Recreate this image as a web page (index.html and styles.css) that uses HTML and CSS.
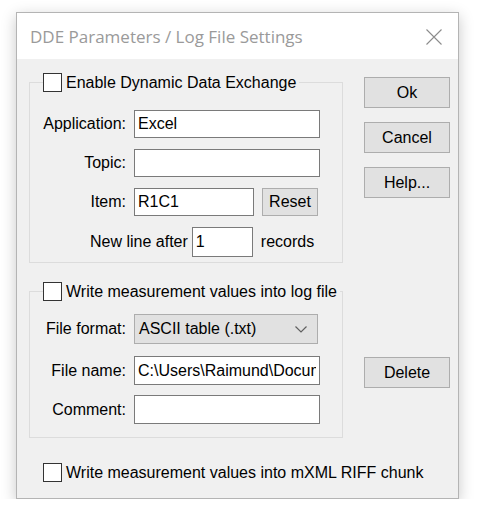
FILE: index.html
```html
<!DOCTYPE html>
<html lang="en">
<head>
    <meta charset="UTF-8">
    <title>DDE Parameters / Log File Settings</title>
    <link rel="stylesheet" href="styles.css">
</head>
<body>
    <div class="window">
        <div class="titlebar">
            <span class="title">DDE Parameters / Log File Settings</span>
            <svg class="close" width="16" height="16" viewBox="0 0 16 16">
                <path d="M0.5 0.5 L15.5 15.5 M15.5 0.5 L0.5 15.5" stroke="#8c8c8c" stroke-width="1.1" fill="none"/>
            </svg>
        </div>
        <div class="client">
            <div class="left">
                <fieldset class="group dde">
                    <legend><label class="check"><input type="checkbox"> Enable Dynamic Data Exchange</label></legend>
                    <div class="row">
                        <span class="lbl">Application:</span>
                        <input class="edit wide" type="text" value="Excel">
                    </div>
                    <div class="row">
                        <span class="lbl">Topic:</span>
                        <input class="edit wide" type="text" value="">
                    </div>
                    <div class="row">
                        <span class="lbl">Item:</span>
                        <input class="edit item" type="text" value="R1C1">
                        <button class="btn reset">Reset</button>
                    </div>
                    <div class="row newline">
                        <span class="lbl-free">New line after</span>
                        <input class="edit count" type="text" value="1">
                        <span class="unit">records</span>
                    </div>
                </fieldset>

                <fieldset class="group log">
                    <legend><label class="check"><input type="checkbox"> Write measurement values into log file</label></legend>
                    <div class="row">
                        <span class="lbl">File format:</span>
                        <div class="combo">
                            <span>ASCII table (.txt)</span>
                            <svg width="12" height="7" viewBox="0 0 12 7">
                                <polyline points="0.5,0.5 6,6 11.5,0.5" stroke="#606060" stroke-width="1.2" fill="none"/>
                            </svg>
                        </div>
                    </div>
                    <div class="row">
                        <span class="lbl">File name:</span>
                        <input class="edit wide tall" type="text" value="C:\Users\Raimund\Documents\log.txt">
                    </div>
                    <div class="row">
                        <span class="lbl">Comment:</span>
                        <input class="edit wide tall" type="text" value="">
                    </div>
                </fieldset>

                <label class="check riff"><input type="checkbox"> Write measurement values into mXML RIFF chunk</label>
            </div>
            <div class="right">
                <button class="btn side">Ok</button>
                <button class="btn side">Cancel</button>
                <button class="btn side">Help...</button>
                <button class="btn side delete">Delete</button>
            </div>
        </div>
    </div>
</body>
</html>
```

FILE: styles.css
```css
body {
    margin: 0;
    background: #fff;
    font-family: 'Liberation Sans', Arial, sans-serif;
    font-size: 16px;
    color: #000;
}
.window {
    margin: 12px 0 0 16px;
    width: 441px;
    border: 1px solid #b4b4b4;
    box-shadow: 0 4px 14px rgba(0, 0, 0, 0.22);
}
.titlebar {
    height: 46px;
    background: #fff;
    display: flex;
    align-items: center;
    padding: 0 16px 0 13px;
}
.title {
    flex: 1;
    font-family: 'Open Sans', sans-serif;
    font-size: 17px;
    color: #9a9a9a;
}
.close {
    display: block;
    margin-top: 2px;
}
.client {
    background: #f0f0f0;
    height: 439px;
    display: flex;
    padding-left: 12px;
}
.left {
    width: 314px;
    flex-shrink: 0;
}
.right {
    margin-left: 21px;
    padding-top: 18px;
    display: flex;
    flex-direction: column;
}
.group {
    margin: 0;
    padding: 18px 0 5px 0;
    border: 1px solid #dcdcdc;
    min-width: 0;
}
.dde {
    margin-top: 14px;
}
.log {
    margin-top: 19px;
    padding-top: 13px;
    padding-bottom: 13px;
}
legend {
    margin-left: 13px;
    padding: 0 3px 0 0;
    line-height: 19px;
}
.check {
    display: flex;
    align-items: center;
    white-space: nowrap;
}
.check input {
    appearance: none;
    -webkit-appearance: none;
    flex-shrink: 0;
    width: 19px;
    height: 19px;
    margin: 0 4px 0 0;
    border: 1.5px solid #333;
    background: #fff;
    box-sizing: border-box;
}
.riff {
    margin: 25px 0 0 14px;
}
.row {
    display: flex;
    align-items: center;
    margin-bottom: 11px;
}
.row:last-child {
    margin-bottom: 0;
}
.log .row {
    margin-bottom: 12px;
}
.log .row + .row {
    margin-bottom: 10px;
}
.log .row:last-child {
    margin-bottom: 0;
}
.lbl {
    width: 96px;
    text-align: right;
    margin-right: 8px;
}
.lbl-free {
    margin-left: 60px;
    margin-right: 4px;
}
.edit {
    height: 28px;
    box-sizing: border-box;
    border: 1px solid #7a7a7a;
    background: #fff;
    font-family: inherit;
    font-size: 16px;
    padding: 0 3px;
    margin: 0;
    outline: none;
    color: #000;
}
.tall {
    height: 29px;
}
.wide {
    width: 186px;
}
.item {
    width: 120px;
}
.count {
    width: 61px;
    height: 30px;
}
.unit {
    margin-left: 8px;
}
.btn {
    box-sizing: border-box;
    background: #e1e1e1;
    border: 1px solid #adadad;
    font-family: inherit;
    font-size: 16px;
    color: #000;
    padding: 0;
    margin: 0;
}
.reset {
    width: 56px;
    height: 28px;
    margin-left: 8px;
}
.side {
    width: 86px;
    height: 31px;
    margin-bottom: 14px;
}
.delete {
    margin-top: 145px;
}
.combo {
    width: 184px;
    height: 30px;
    box-sizing: border-box;
    background: #e1e1e1;
    border: 1px solid #adadad;
    display: flex;
    align-items: center;
    justify-content: space-between;
    padding: 0 10px 0 4px;
}
.combo svg {
    display: block;
}
```
